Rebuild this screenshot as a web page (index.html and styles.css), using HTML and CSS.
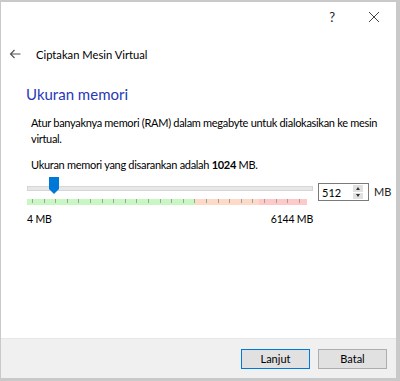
FILE: index.html
```html
<!DOCTYPE html>
<html lang="id">
<head>
    <meta charset="UTF-8">
    <title>Ciptakan Mesin Virtual</title>
    <link rel="stylesheet" href="styles.css">
</head>
<body>
    <div class="dialog">
        <div class="titlebar">
            <span class="help">?</span>
            <svg class="close" width="12" height="12" viewBox="0 0 12 12">
                <path d="M1 1 L11 11 M11 1 L1 11" stroke="#444" stroke-width="1" fill="none"/>
            </svg>
        </div>

        <div class="header">
            <svg class="back" width="12" height="10" viewBox="0 0 12 10">
                <path d="M11.5 5 H1.5 M5.5 1 L1.5 5 L5.5 9" stroke="#555" stroke-width="1.2" fill="none"/>
            </svg>
            <span class="header-title">Ciptakan Mesin Virtual</span>
        </div>

        <div class="content">
            <h1>Ukuran memori</h1>
            <p class="desc">Atur banyaknya memori (RAM) dalam megabyte untuk dialokasikan ke mesin virtual.</p>
            <p class="recommend">Ukuran memori yang disarankan adalah <b>1024</b> MB.</p>

            <div class="slider-row">
                <div class="slider">
                    <div class="track"></div>
                    <div class="thumb"></div>
                    <div class="scale">
                        <div class="zone green"></div>
                        <div class="zone orange"></div>
                        <div class="zone red"></div>
                    </div>
                    <div class="limits">
                        <span>4 MB</span>
                        <span>6144 MB</span>
                    </div>
                </div>
                <div class="spin">
                    <span class="spin-value">512</span>
                    <div class="spin-btns">
                        <div class="spin-btn"><span class="tri up"></span></div>
                        <div class="spin-btn"><span class="tri down"></span></div>
                    </div>
                </div>
                <span class="unit">MB</span>
            </div>
        </div>

        <div class="footer">
            <button class="btn default">Lanjut</button>
            <button class="btn">Batal</button>
        </div>
    </div>
</body>
</html>
```

FILE: styles.css
```css
/* Fondo detrás de la ventana */
body {
    margin: 0;
    background-color: #c9c9c9;
    font-family: Lato, "Noto Sans", sans-serif;
    font-size: 11px;
    color: #000;
}

/* Ventana del diálogo */
.dialog {
    margin: 2px 4px 0 1px;
    height: 376px;
    background-color: #fff;
    display: flex;
    flex-direction: column;
}

/* Barra de título */
.titlebar {
    height: 30px;
    display: flex;
    align-items: center;
    justify-content: flex-end;
    padding-right: 16px;
}

.help {
    font-size: 13px;
    margin-right: 33px;
    color: #222;
}

/* Encabezado con flecha */
.header {
    height: 44px;
    display: flex;
    align-items: center;
    padding-left: 8px;
}

.back {
    margin-right: 15px;
}

.header-title {
    font-size: 11.2px;
}

/* Contenido principal */
.content {
    flex: 1;
    padding-left: 25px;
}

.content h1 {
    margin: 9px 0 0 0;
    font-size: 15px;
    font-weight: normal;
    color: #2637b8;
}

.desc {
    margin: 12px 18px 0 5px;
    line-height: 16px;
    letter-spacing: -0.3px;
}

.recommend {
    margin: 11px 0 0 5px;
    letter-spacing: -0.3px;
}

/* Deslizador de memoria */
.slider-row {
    display: flex;
    align-items: flex-start;
    margin-top: 5px;
    margin-left: 1px;
}

.slider {
    width: 286px;
    position: relative;
}

.track {
    margin-top: 10px;
    height: 3px;
    background-color: #e7e7e7;
    border: 1px solid #d6d6d6;
}

.thumb {
    position: absolute;
    left: 22px;
    top: 1px;
    width: 10px;
    height: 17px;
    background-color: #0078d7;
    clip-path: polygon(0 0, 100% 0, 100% 70%, 50% 100%, 0 70%);
}

.scale {
    margin-top: 8px;
    width: 280px;
    height: 6px;
    display: flex;
    position: relative;
}

.scale::after {
    content: "";
    position: absolute;
    left: 5px;
    right: 0;
    top: 0;
    height: 4px;
    background: repeating-linear-gradient(to right, #a0a0a0 0, #a0a0a0 1px, transparent 1px, transparent 11.6px);
}

.zone.green {
    width: 168px;
    background-color: #c9f7c3;
}

.zone.orange {
    width: 64px;
    background-color: #fdd9c8;
}

.zone.red {
    flex: 1;
    background-color: #fdc9c9;
}

.limits {
    display: flex;
    justify-content: space-between;
    margin-top: 8px;
    font-size: 10.5px;
    letter-spacing: -0.2px;
}

/* Caja numérica */
.spin {
    margin-left: 5px;
    margin-top: 7px;
    width: 49px;
    height: 16px;
    border: 1px solid #7a7a7a;
    display: flex;
    align-items: center;
    justify-content: space-between;
}

.spin-value {
    padding-left: 3px;
}

.spin-btns {
    width: 10px;
    height: 14px;
    margin-right: 5px;
    display: flex;
    flex-direction: column;
    gap: 1px;
}

.spin-btn {
    flex: 1;
    background-color: #e1e1e1;
    display: flex;
    align-items: center;
    justify-content: center;
}

.tri {
    width: 0;
    height: 0;
    border-left: 2.5px solid transparent;
    border-right: 2.5px solid transparent;
}

.tri.up {
    border-bottom: 3px solid #333;
}

.tri.down {
    border-top: 3px solid #333;
}

.unit {
    margin-left: 5px;
    margin-top: 9px;
    color: #222;
}

/* Pie con botones */
.footer {
    height: 39px;
    background-color: #f0f0f0;
    border-top: 1px solid #e6e6e6;
    display: flex;
    align-items: center;
    justify-content: flex-end;
    gap: 8px;
    padding-right: 9px;
}

.btn {
    width: 69px;
    height: 20px;
    font-family: Lato, "Noto Sans", sans-serif;
    font-size: 11px;
    background-color: #e1e1e1;
    border: 1px solid #adadad;
    padding: 0;
}

.btn.default {
    border: 1px solid #0078d7;
}
```
